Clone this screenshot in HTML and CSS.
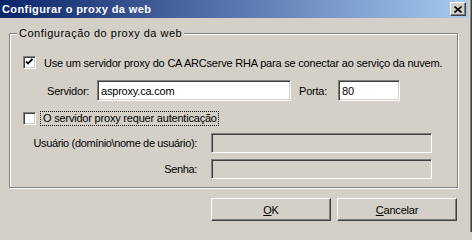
FILE: index.html
```html
<!DOCTYPE html>
<html>
<head>
<meta charset="utf-8">
<link rel="stylesheet" href="styles.css">
</head>
<body>
<div class="window">
  <div class="frame">
    <div class="titlebar">
      <span class="title">Configurar o proxy da web</span>
      <span class="close"><svg width="8" height="7" viewBox="0 0 8 7"><path d="M0.5 0.5 L7.5 6.5 M7.5 0.5 L0.5 6.5" stroke="#000" stroke-width="1.6" fill="none"/></svg></span>
    </div>
    <fieldset class="group">
      <legend class="legend">Configuração do proxy da web</legend>
      <div class="row row-check1">
        <span class="checkbox"><svg width="9" height="9" viewBox="0 0 9 9"><path d="M1 3.5 L3 5.5 L7.5 1" stroke="#000" stroke-width="1.8" fill="none"/></svg></span>
        <span class="check-label">Use um servidor proxy do CA ARCserve RHA para se conectar ao serviço da nuvem.</span>
      </div>
      <div class="row row-server">
        <span class="lbl-server">Servidor:</span>
        <span class="edit edit-server">asproxy.ca.com</span>
        <span class="lbl-port">Porta:</span>
        <span class="edit edit-port">80</span>
      </div>
      <div class="row row-check2">
        <span class="checkbox"></span>
        <span class="focus-label">O servidor proxy requer autenticação</span>
      </div>
      <div class="row row-user">
        <span class="flabel">Usuário (domínio\nome de usuário):</span>
        <span class="edit edit-disabled"></span>
      </div>
      <div class="row row-pass">
        <span class="flabel">Senha:</span>
        <span class="edit edit-disabled"></span>
      </div>
    </fieldset>
    <div class="buttons">
      <span class="button"><u>O</u>K</span>
      <span class="button"><u>C</u>ancelar</span>
    </div>
  </div>
</div>
</body>
</html>
```

FILE: styles.css
```css
html, body {
  margin: 0;
  padding: 0;
  background: #d4d0c8;
}
body {
  font-family: "Liberation Sans", Arial, sans-serif;
  font-size: 11px;
  letter-spacing: -0.2px;
  color: #000;
}
.window {
  width: 472px;
  height: 232px;
  box-sizing: border-box;
  border-right: 1px solid #404040;
  background: #d4d0c8;
  overflow: hidden;
}
.frame {
  height: 232px;
  box-sizing: border-box;
  border-right: 1px solid #808080;
  display: flex;
  flex-direction: column;
}
.titlebar {
  height: 18px;
  margin-right: 2px;
  background: linear-gradient(to right, #0a246a, #a6caf0);
  display: flex;
  align-items: center;
  justify-content: space-between;
  padding-left: 2px;
}
.title {
  color: #fff;
  font-weight: bold;
  font-size: 11px;
  letter-spacing: 0.4px;
  line-height: 13px;
}
.close {
  width: 16px;
  height: 14px;
  box-sizing: border-box;
  margin-right: 2px;
  background: #d4d0c8;
  border-top: 1px solid #fff;
  border-left: 1px solid #fff;
  border-right: 1px solid #404040;
  border-bottom: 1px solid #404040;
  box-shadow: inset -1px -1px 0 #808080;
  display: flex;
  align-items: center;
  justify-content: center;
}
.group {
  margin: 9px 12px 0 9px;
  padding: 14px 0 8px 0;
  min-width: 0;
  border: 1px solid #808080;
  box-shadow: 1px 1px 0 #fff, inset 1px 1px 0 #fff;
}
.legend {
  margin-left: 7px;
  padding: 0 2px;
  line-height: 13px;
  letter-spacing: 0.5px;
  background: #d4d0c8;
}
.row {
  display: flex;
  align-items: center;
}
.row-check1 {
  height: 17px;
  padding-left: 13px;
}
.checkbox {
  width: 13px;
  height: 13px;
  box-sizing: border-box;
  background: #fff;
  border-top: 1px solid #808080;
  border-left: 1px solid #808080;
  border-right: 1px solid #fff;
  border-bottom: 1px solid #fff;
  box-shadow: inset 1px 1px 0 #404040, inset -1px -1px 0 #d4d0c8;
  display: flex;
  align-items: center;
  justify-content: center;
  flex: none;
}
.check-label {
  margin-left: 8px;
  white-space: nowrap;
}
.row-server {
  height: 21px;
  margin-top: 9px;
  padding-left: 37px;
}
.lbl-server {
  width: 50px;
}
.edit {
  box-sizing: border-box;
  height: 21px;
  background: #fff;
  border-top: 1px solid #808080;
  border-left: 1px solid #808080;
  border-right: 1px solid #fff;
  border-bottom: 1px solid #fff;
  box-shadow: inset 1px 1px 0 #404040, inset -1px -1px 0 #d4d0c8;
  padding-left: 3px;
  display: flex;
  align-items: center;
  white-space: nowrap;
}
.edit-server {
  width: 194px;
}
.lbl-port {
  margin-left: 8px;
  width: 39px;
}
.edit-port {
  width: 62px;
}
.row-check2 {
  height: 15px;
  margin-top: 10px;
  padding-left: 13px;
}
.focus-label {
  margin-left: 4px;
  padding: 0 1px 0 2px;
  border: 1px dotted #000;
  line-height: 13px;
  white-space: nowrap;
}
.row-user {
  margin-top: 7px;
  height: 20px;
}
.row-pass {
  margin-top: 6px;
  height: 20px;
}
.flabel {
  width: 190px;
  padding-right: 3px;
  box-sizing: border-box;
  text-align: right;
  white-space: nowrap;
  letter-spacing: -0.35px;
}
.edit-disabled {
  margin-left: 11px;
  width: 221px;
  height: 20px;
  background: #d4d0c8;
}
.buttons {
  display: flex;
  justify-content: flex-end;
  gap: 6px;
  margin-top: 10px;
  padding-right: 13px;
}
.button {
  width: 120px;
  height: 23px;
  box-sizing: border-box;
  border-top: 1px solid #fff;
  border-left: 1px solid #fff;
  border-right: 1px solid #404040;
  border-bottom: 1px solid #404040;
  box-shadow: inset -1px -1px 0 #808080;
  display: flex;
  align-items: center;
  justify-content: center;
}
```
